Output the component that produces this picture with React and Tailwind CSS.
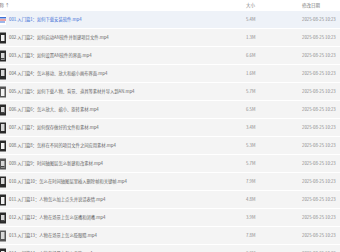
import React from "react";

const rows = [
  ["001.入门篇1：如何下载安装软件.mp4", "5.4M"],
  ["002.入门篇2：如何启动AN软件并新建项目文件.mp4", "1.3M"],
  ["003.入门篇3：如何设置AN软件的界面.mp4", "6.6M"],
  ["004.入门篇4：怎么移动、放大和缩小画布界面.mp4", "1.6M"],
  ["005.入门篇5：如何下载人物、背景、道具等素材并导入到AN.mp4", "5.7M"],
  ["006.入门篇6：怎么放大、缩小、旋转素材.mp4", "6.5M"],
  ["007.入门篇7：如何保存做好的文件和素材.mp4", "3.4M"],
  ["008.入门篇8：怎样在不同的项目文件之间应用素材.mp4", "5.3M"],
  ["009.入门篇9：时间轴图层怎么新建和改素材.mp4", "5.7M"],
  ["010.入门篇10：怎么在时间轴图层里插入删除帧和关键帧.mp4", "7.9M"],
  ["011.入门篇11：人物怎么加上点头并说话表情.mp4", "4.8M"],
  ["012.入门篇12：人物在场景上怎么张嘴和闭嘴.mp4", "3.9M"],
  ["013.入门篇13：人物在场景上怎么眨眼睛.mp4", "7.8M"],
  ["014.入门篇14：人物在场景上怎么走路.mp4", "6.2M"],
];

function Icon({ i }) {
  if (i === 0) {
    return (
      <svg width="12" height="12" viewBox="0 0 12 12" className="shrink-0">
        <rect x="0" y="1" width="12" height="10" fill="#ffffff" />
        <rect x="6" y="3" width="6" height="1.5" fill="#3d6fd6" />
        <rect x="6" y="5.5" width="6" height="1" fill="#d94b4b" />
        <rect x="6" y="7.5" width="5" height="1" fill="#3d6fd6" />
      </svg>
    );
  }
  const light = i % 4 === 0;
  return (
    <svg width="12" height="12" viewBox="0 0 12 12" className="shrink-0">
      <rect x="0" y="0.5" width="12" height="11" fill={light ? "#555" : "#2a2a2a"} />
      <rect
        x="7"
        y={i % 3 === 0 ? 2 : 3}
        width="3.5"
        height={i % 2 === 0 ? 7 : 6}
        fill={i % 3 === 1 ? "#f2f2f2" : "#d8d8d8"}
      />
      {i % 3 === 2 && <rect x="7" y="8" width="3.5" height="1.5" fill="#444" />}
    </svg>
  );
}

export default function App() {
  return (
    <div
      className="w-[340px] h-[252px] overflow-hidden bg-white flex flex-col"
      style={{ fontFamily: '"Noto Sans CJK SC", "Noto Sans", sans-serif' }}
    >
      <div className="h-[10px] shrink-0 flex items-center text-[4.5px] text-[#777]">
        <div className="flex-1 ml-[-5px]">名称 ↑</div>
        <div className="w-[56px]">大小</div>
        <div className="w-[38px]">修改日期</div>
      </div>
      {rows.map(([name, size], i) => (
        <div
          key={i}
          className={
            "h-[18px] shrink-0 flex items-center border-t border-white text-[4.3px] " +
            (i === 0 ? "bg-[#eef2f8]" : "bg-[#f4f4f4]")
          }
        >
          <div className="flex-1 flex items-center min-w-0">
            <div className="ml-[-6px] mr-[3px]">
              <Icon i={i} />
            </div>
            <span className={i === 0 ? "text-[#3d6fd6] whitespace-nowrap" : "text-[#666] whitespace-nowrap"}>
              {name}
            </span>
          </div>
          <div className="w-[56px] text-[#888]">{size}</div>
          <div className="w-[38px] text-[#888] whitespace-nowrap">2025-08-25 10:23</div>
        </div>
      ))}
    </div>
  );
}
